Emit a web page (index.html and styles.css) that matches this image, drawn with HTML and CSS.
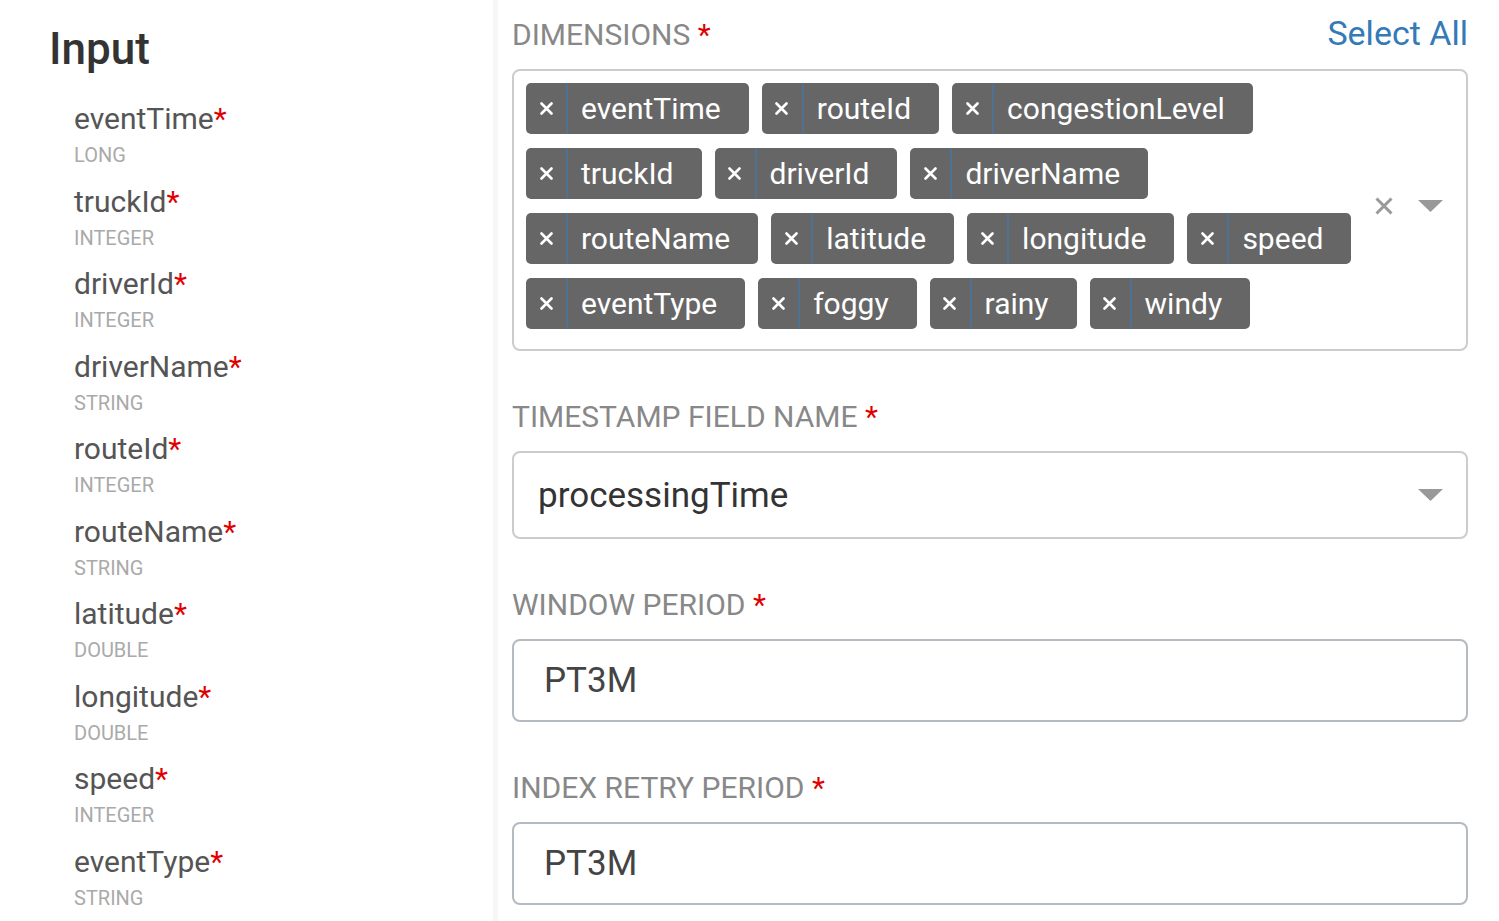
FILE: index.html
```html
<!DOCTYPE html>
<html lang="en">
<head>
<meta charset="utf-8">
<title>Input</title>
<link rel="stylesheet" href="styles.css">
</head>
<body>
<div class="page">
  <aside class="left">
    <h1 class="title">Input</h1>
    <ul class="fields">
      <li class="field"><div class="fname">eventTime<span class="req">*</span></div><div class="ftype">LONG</div></li>
      <li class="field"><div class="fname">truckId<span class="req">*</span></div><div class="ftype">INTEGER</div></li>
      <li class="field"><div class="fname">driverId<span class="req">*</span></div><div class="ftype">INTEGER</div></li>
      <li class="field"><div class="fname">driverName<span class="req">*</span></div><div class="ftype">STRING</div></li>
      <li class="field"><div class="fname">routeId<span class="req">*</span></div><div class="ftype">INTEGER</div></li>
      <li class="field"><div class="fname">routeName<span class="req">*</span></div><div class="ftype">STRING</div></li>
      <li class="field"><div class="fname">latitude<span class="req">*</span></div><div class="ftype">DOUBLE</div></li>
      <li class="field"><div class="fname">longitude<span class="req">*</span></div><div class="ftype">DOUBLE</div></li>
      <li class="field"><div class="fname">speed<span class="req">*</span></div><div class="ftype">INTEGER</div></li>
      <li class="field"><div class="fname">eventType<span class="req">*</span></div><div class="ftype">STRING</div></li>
    </ul>
  </aside>
  <main class="right">
    <section class="group">
      <div class="label-row label-row--top">
        <span class="label">DIMENSIONS <span class="req">*</span></span>
        <a class="select-all">Select All</a>
      </div>
      <div class="multi">
        <div class="values">
          <span class="chip"><span class="chip-x"><svg width="13" height="13" viewBox="0 0 13 13"><path d="M1.5 1.5 L11.5 11.5 M11.5 1.5 L1.5 11.5" stroke="#fff" stroke-width="2.6" stroke-linecap="round"/></svg></span><span class="chip-label">eventTime</span></span>
          <span class="chip"><span class="chip-x"><svg width="13" height="13" viewBox="0 0 13 13"><path d="M1.5 1.5 L11.5 11.5 M11.5 1.5 L1.5 11.5" stroke="#fff" stroke-width="2.6" stroke-linecap="round"/></svg></span><span class="chip-label">routeId</span></span>
          <span class="chip"><span class="chip-x"><svg width="13" height="13" viewBox="0 0 13 13"><path d="M1.5 1.5 L11.5 11.5 M11.5 1.5 L1.5 11.5" stroke="#fff" stroke-width="2.6" stroke-linecap="round"/></svg></span><span class="chip-label">congestionLevel</span></span>
          <span class="chip"><span class="chip-x"><svg width="13" height="13" viewBox="0 0 13 13"><path d="M1.5 1.5 L11.5 11.5 M11.5 1.5 L1.5 11.5" stroke="#fff" stroke-width="2.6" stroke-linecap="round"/></svg></span><span class="chip-label">truckId</span></span>
          <span class="chip"><span class="chip-x"><svg width="13" height="13" viewBox="0 0 13 13"><path d="M1.5 1.5 L11.5 11.5 M11.5 1.5 L1.5 11.5" stroke="#fff" stroke-width="2.6" stroke-linecap="round"/></svg></span><span class="chip-label">driverId</span></span>
          <span class="chip"><span class="chip-x"><svg width="13" height="13" viewBox="0 0 13 13"><path d="M1.5 1.5 L11.5 11.5 M11.5 1.5 L1.5 11.5" stroke="#fff" stroke-width="2.6" stroke-linecap="round"/></svg></span><span class="chip-label">driverName</span></span>
          <span class="chip"><span class="chip-x"><svg width="13" height="13" viewBox="0 0 13 13"><path d="M1.5 1.5 L11.5 11.5 M11.5 1.5 L1.5 11.5" stroke="#fff" stroke-width="2.6" stroke-linecap="round"/></svg></span><span class="chip-label">routeName</span></span>
          <span class="chip"><span class="chip-x"><svg width="13" height="13" viewBox="0 0 13 13"><path d="M1.5 1.5 L11.5 11.5 M11.5 1.5 L1.5 11.5" stroke="#fff" stroke-width="2.6" stroke-linecap="round"/></svg></span><span class="chip-label">latitude</span></span>
          <span class="chip"><span class="chip-x"><svg width="13" height="13" viewBox="0 0 13 13"><path d="M1.5 1.5 L11.5 11.5 M11.5 1.5 L1.5 11.5" stroke="#fff" stroke-width="2.6" stroke-linecap="round"/></svg></span><span class="chip-label">longitude</span></span>
          <span class="chip"><span class="chip-x"><svg width="13" height="13" viewBox="0 0 13 13"><path d="M1.5 1.5 L11.5 11.5 M11.5 1.5 L1.5 11.5" stroke="#fff" stroke-width="2.6" stroke-linecap="round"/></svg></span><span class="chip-label">speed</span></span>
          <span class="chip"><span class="chip-x"><svg width="13" height="13" viewBox="0 0 13 13"><path d="M1.5 1.5 L11.5 11.5 M11.5 1.5 L1.5 11.5" stroke="#fff" stroke-width="2.6" stroke-linecap="round"/></svg></span><span class="chip-label">eventType</span></span>
          <span class="chip"><span class="chip-x"><svg width="13" height="13" viewBox="0 0 13 13"><path d="M1.5 1.5 L11.5 11.5 M11.5 1.5 L1.5 11.5" stroke="#fff" stroke-width="2.6" stroke-linecap="round"/></svg></span><span class="chip-label">foggy</span></span>
          <span class="chip"><span class="chip-x"><svg width="13" height="13" viewBox="0 0 13 13"><path d="M1.5 1.5 L11.5 11.5 M11.5 1.5 L1.5 11.5" stroke="#fff" stroke-width="2.6" stroke-linecap="round"/></svg></span><span class="chip-label">rainy</span></span>
          <span class="chip"><span class="chip-x"><svg width="13" height="13" viewBox="0 0 13 13"><path d="M1.5 1.5 L11.5 11.5 M11.5 1.5 L1.5 11.5" stroke="#fff" stroke-width="2.6" stroke-linecap="round"/></svg></span><span class="chip-label">windy</span></span>
        </div>
        <div class="indicators">
          <svg class="clear-icon" width="18" height="18" viewBox="0 0 18 18"><path d="M1.5 1.5 L16.5 16.5 M16.5 1.5 L1.5 16.5" stroke="#999" stroke-width="3"/></svg>
          <svg class="arrow-icon" width="25" height="12" viewBox="0 0 25 12"><polygon points="0,0 25,0 12.5,12" fill="#999"/></svg>
        </div>
      </div>
    </section>

    <section class="group">
      <div class="label-row">
        <span class="label">TIMESTAMP FIELD NAME <span class="req">*</span></span>
      </div>
      <div class="select">
        <span class="select-value">processingTime</span>
        <svg class="arrow-icon" width="25" height="12" viewBox="0 0 25 12"><polygon points="0,0 25,0 12.5,12" fill="#999"/></svg>
      </div>
    </section>

    <section class="group">
      <div class="label-row">
        <span class="label">WINDOW PERIOD <span class="req">*</span></span>
      </div>
      <div class="input">PT3M</div>
    </section>

    <section class="group">
      <div class="label-row">
        <span class="label">INDEX RETRY PERIOD <span class="req">*</span></span>
      </div>
      <div class="input">PT3M</div>
    </section>
  </main>
</div>
</body>
</html>
```

FILE: styles.css
```css
html, body {
  margin: 0;
  padding: 0;
  background: #fff;
  height: 100%;
  overflow: hidden;
}

body {
  font-family: Roboto, "Liberation Sans", Arial, sans-serif;
}

.page {
  display: grid;
  grid-template-columns: 498px 1fr;
  height: 921px;
}

.left {
  border-right: 5px solid #f7f7f7;
  padding: 23px 0 0 48px;
}

.title {
  margin: 0 0 0 1px;
  font-size: 44px;
  line-height: 52px;
  font-weight: 500;
  color: #333;
}

.fields {
  list-style: none;
  margin: 26px 0 0 26px;
  padding: 0;
}

.field {
  height: 82.5px;
}

.fname {
  font-size: 30px;
  line-height: 36px;
  color: #555;
}

.ftype {
  margin-top: 6px;
  font-size: 20px;
  line-height: 24px;
  color: #aaa;
}

.req {
  color: #e00000;
}

.right {
  padding: 13px 31px 0 14px;
}

.group {
  margin-bottom: 46px;
}

.label-row {
  display: flex;
  justify-content: space-between;
  align-items: baseline;
  height: 40px;
  margin-bottom: 14px;
}

.label-row--top {
  margin-bottom: 16px;
}

.label {
  font-size: 30px;
  line-height: 40px;
  color: #888;
}

.select-all {
  font-size: 34px;
  line-height: 40px;
  color: #337ab7;
  cursor: pointer;
}

.multi {
  display: flex;
  align-items: center;
  height: 282px;
  box-sizing: border-box;
  border: 2px solid #ccc;
  border-radius: 8px;
  padding: 12px 0 20px 12px;
}

.values {
  flex: 1;
  display: flex;
  flex-wrap: wrap;
  gap: 14px 13px;
  align-content: flex-start;
  align-self: stretch;
}

.chip {
  display: flex;
  height: 51px;
  background: #666;
  border-radius: 5px;
  color: #fff;
  overflow: hidden;
}

.chip-x {
  width: 40px;
  display: flex;
  align-items: center;
  justify-content: center;
  border-right: 2px solid #4f7293;
}

.chip-label {
  padding: 0 28px 0 13px;
  font-size: 30px;
  line-height: 51px;
}

.indicators {
  display: flex;
  align-items: center;
  gap: 25px;
  padding: 0 23px 0 13px;
}

.select {
  display: flex;
  align-items: center;
  justify-content: space-between;
  height: 88px;
  box-sizing: border-box;
  border: 2px solid #ccc;
  border-radius: 8px;
  padding: 0 23px 0 24px;
}

.select-value {
  font-size: 35px;
  color: #333;
}

.input {
  display: flex;
  align-items: center;
  height: 83px;
  box-sizing: border-box;
  border: 2px solid #b4bac1;
  border-radius: 8px;
  padding: 0 30px;
  font-size: 35px;
  color: #444;
}
```
